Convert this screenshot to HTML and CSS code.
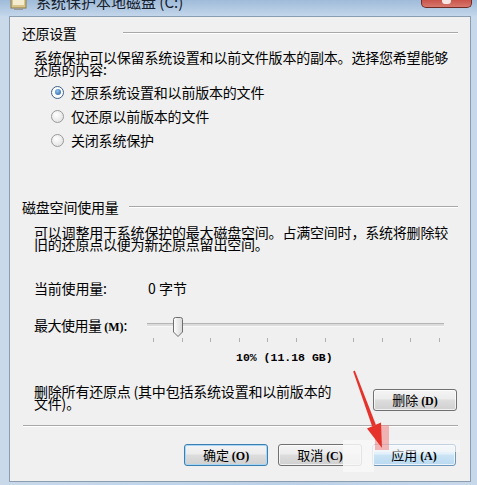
FILE: index.html
```html
<!DOCTYPE html>
<html lang="zh-CN">
<head>
    <meta charset="UTF-8">
    <title>系统保护本地磁盘 (C:)</title>
    <link rel="stylesheet" href="styles.css">
</head>
<body>
    <div class="window">
        <div class="titlebar">
            <div class="title">
                <svg class="app-icon" width="18" height="12" viewBox="0 0 18 12">
                    <rect x="1" y="0" width="15" height="9" fill="#d9c58a" stroke="#8a7a4a"/>
                    <rect x="3" y="1" width="11" height="5" fill="#f3ecd0"/>
                    <rect x="4" y="9" width="9" height="2" fill="#9a9a9a"/>
                </svg>
                <span class="title-text">系统保护本地磁盘 (C:)</span>
            </div>
            <div class="close-btn"><span class="close-x"></span></div>
        </div>

        <div class="frame">
            <div class="client">
                <div class="group-head">
                    <span>还原设置</span>
                    <span class="rule rule-restore"></span>
                </div>
                <p class="desc">系统保护可以保留系统设置和以前文件版本的副本。选择您希望能够<br>还原的内容:</p>

                <div class="radio-list">
                    <div class="radio-row"><span class="radio checked"></span>还原系统设置和以前版本的文件</div>
                    <div class="radio-row"><span class="radio"></span>仅还原以前版本的文件</div>
                    <div class="radio-row"><span class="radio"></span>关闭系统保护</div>
                </div>

                <div class="group-head group-disk">
                    <span>磁盘空间使用量</span>
                    <span class="rule rule-disk"></span>
                </div>
                <p class="desc">可以调整用于系统保护的最大磁盘空间。占满空间时，系统将删除较<br>旧的还原点以便为新还原点留出空间。</p>

                <div class="usage-row">
                    <span class="field-label">当前使用量:</span>
                    <span>0 字节</span>
                </div>

                <div class="slider-row">
                    <span class="field-label">最大使用量 <span class="key">(M)</span>:</span>
                    <div class="slider">
                        <div class="track-area"><div class="track"></div></div>
                        <svg class="thumb" style="left: 25px" width="12" height="20" viewBox="0 0 12 20">
                            <defs>
                                <linearGradient id="thumbFill" x1="0" y1="0" x2="1" y2="0">
                                    <stop offset="0" stop-color="#fdfdfd"/>
                                    <stop offset="1" stop-color="#d8d8d8"/>
                                </linearGradient>
                            </defs>
                            <path d="M1.5 2.5 Q1.5 0.5 3.5 0.5 L8.5 0.5 Q10.5 0.5 10.5 2.5 L10.5 15 L6 19.5 L1.5 15 Z" fill="url(#thumbFill)" stroke="#6e6e6e"/>
                        </svg>
                        <div class="ticks">
                            <i></i><i></i><i></i><i></i><i></i><i></i><i></i><i></i><i></i><i></i><i></i>
                        </div>
                    </div>
                </div>
                <div class="slider-value">10% (11.18 GB)</div>

                <div class="delete-row">
                    <p class="desc">删除所有还原点 (其中包括系统设置和以前版本的<br>文件)。</p>
                    <button class="btn btn-delete">删除 <span class="key">(D)</span></button>
                </div>

                <div class="separator"></div>

                <div class="actions">
                    <button class="btn btn-default">确定 <span class="key">(O)</span></button>
                    <button class="btn">取消 <span class="key">(C)</span></button>
                    <button class="btn btn-apply">应用 <span class="key">(A)</span></button>
                </div>
            </div>
        </div>

        <!-- watermark / annotation layer -->
        <div class="smudge smudge-left"></div>
        <div class="smudge smudge-right"></div>
        <div class="smudge-pink"></div>
        <svg class="arrow" width="477" height="485" viewBox="0 0 477 485">
            <polygon points="354.8,370.6 353.2,371.4 372.1,426.2 375.9,424.8" fill="#e5322b"/>
            <polygon points="381,422.4 367,428.6 382,448" fill="#e5322b"/>
        </svg>
    </div>
</body>
</html>
```

FILE: styles.css
```css
body {
    margin: 0;
    font-family: "Noto Sans CJK SC", "Noto Sans", sans-serif;
    color: #000;
    background-color: #c4d5e7;
    overflow: hidden;
}

.window {
    position: relative;
    width: 477px;
    height: 485px;
    display: flex;
    flex-direction: column;
    background: linear-gradient(to right, #c9d9ea, #bcd0e6 60%, #c7d8ea);
}

/* title bar, cut off at the top of the shot */
.titlebar {
    height: 16px;
    display: flex;
    justify-content: space-between;
    align-items: flex-start;
    overflow: hidden;
    background: linear-gradient(to bottom, #9fbbd9, #c3d6ea);
}

.title {
    display: flex;
    align-items: flex-start;
    padding-left: 10px;
}

.app-icon {
    margin-top: -1px;
}

.title-text {
    margin-left: 8px;
    margin-top: -8px;
    font-size: 15px;
    line-height: 20px;
    color: #15202c;
}

.close-btn {
    width: 49px;
    height: 7px;
    margin-right: 5px;
    border: 1px solid #6f2b24;
    border-top: none;
    border-radius: 0 0 5px 5px;
    background: linear-gradient(to bottom, #c9544a, #d7786d);
    display: flex;
    justify-content: center;
}

.close-x {
    width: 9px;
    height: 4px;
    background-color: #f6e6e4;
    border-radius: 0 0 3px 3px;
}

.frame {
    flex: 1;
    display: flex;
    padding: 0 6px 3px 9px;
}

.client {
    flex: 1;
    display: flex;
    flex-direction: column;
    background-color: #f0f0f0;
    border: 1px solid #8b9db1;
    padding-top: 8px;
    font-size: 14px;
}

.group-head {
    display: flex;
    align-items: center;
    padding: 0 12px;
    line-height: 16px;
    letter-spacing: -0.4px;
}

.group-disk {
    margin-top: 47px;
    letter-spacing: -0.2px;
}

.rule {
    flex: 1;
    border-top: 1px solid #a8a8a8;
    border-bottom: 1px solid #ffffff;
}

.rule-restore {
    margin-left: 47px;
}

.rule-disk {
    margin-left: 10px;
}

.desc {
    margin: 10px 0 0;
    padding-left: 24px;
    line-height: 12px;
    letter-spacing: -0.2px;
    white-space: nowrap;
}

.group-disk + .desc {
    margin-top: 11px;
}

.radio-list {
    margin-top: 5px;
    padding-left: 41px;
}

.radio-row {
    height: 24px;
    display: flex;
    align-items: center;
    gap: 7px;
    letter-spacing: -0.2px;
}

.radio {
    width: 11px;
    height: 11px;
    border-radius: 50%;
    border: 1px solid #9a9a9a;
    background: radial-gradient(circle at 40% 35%, #ffffff, #dcdcdc);
    display: flex;
    justify-content: center;
    align-items: center;
}

.radio.checked {
    border-color: #3d5f8a;
    background: #ffffff;
}

.radio.checked::after {
    content: "";
    width: 6px;
    height: 6px;
    border-radius: 50%;
    background: radial-gradient(circle at 40% 35%, #8fc2f0, #1f5a9c);
}

.usage-row {
    margin-top: 30px;
    padding-left: 24px;
    display: flex;
    line-height: 16px;
}

.field-label {
    width: 114px;
    letter-spacing: -0.2px;
}

.key {
    font-family: "Liberation Serif", serif;
    font-size: 12px;
    font-weight: bold;
    letter-spacing: 0;
}

.slider-row {
    margin-top: 18px;
    padding-left: 24px;
    display: flex;
    align-items: flex-start;
}

.slider-row .field-label {
    width: 113px;
    line-height: 22px;
    letter-spacing: -0.5px;
}

.slider {
    position: relative;
    width: 297px;
}

.track-area {
    height: 22px;
    display: flex;
    align-items: center;
}

.track {
    flex: 1;
    height: 2px;
    border-top: 1px solid #b4b4b4;
    border-bottom: 1px solid #f8f8f8;
    background-color: #dcdcdc;
}

.thumb {
    position: absolute;
    top: 3px;
}

.ticks {
    margin-top: 2px;
    padding: 0 4px 0 6px;
    display: flex;
    justify-content: space-between;
}

.ticks i {
    width: 1px;
    height: 4px;
    background-color: #b0b0b0;
}

.slider-value {
    margin-top: 9px;
    padding-left: 226px;
    font-family: "Liberation Mono", monospace;
    font-size: 11.5px;
    font-weight: bold;
    line-height: 14px;
}

.delete-row {
    margin-top: 20px;
    padding-right: 13px;
    display: flex;
    justify-content: space-between;
    align-items: flex-start;
}

.delete-row .desc {
    margin: 0;
}

.btn {
    width: 84px;
    height: 22px;
    padding: 0;
    border: 1px solid #707070;
    border-radius: 3px;
    background: linear-gradient(to bottom, #f4f4f4 0%, #ececec 45%, #dddddd 50%, #d0d0d0 100%);
    box-shadow: inset 0 0 0 1px rgba(255, 255, 255, 0.7);
    font-family: "Noto Sans CJK SC", sans-serif;
    font-size: 13px;
    line-height: 18px;
    color: #000;
}

.btn-delete {
    margin-top: 4px;
}

.btn-default {
    border-color: #3c7fb1;
    box-shadow: inset 0 0 0 1px #a9d6f5;
}

.btn-apply {
    background: linear-gradient(to bottom, #f0f6fb 0%, #e3f0fa 45%, #cbe4f5 50%, #b9d9f0 100%);
    border-color: #6f96b8;
}

.separator {
    margin: 14px 12px 0 13px;
    border-top: 1px solid #a8a8a8;
    border-bottom: 1px solid #ffffff;
}

.actions {
    margin-top: 17px;
    padding-right: 14px;
    display: flex;
    justify-content: flex-end;
    gap: 10px;
}

/* smudged watermark over the lower right buttons */
.smudge {
    position: absolute;
    background-color: rgba(248, 248, 248, 0.85);
}

.smudge-left {
    left: 343px;
    top: 440px;
    width: 31px;
    height: 32px;
}

.smudge-right {
    left: 374px;
    top: 440px;
    width: 86px;
    height: 12px;
    background-color: rgba(248, 248, 248, 0.6);
}

.smudge-pink {
    position: absolute;
    left: 375px;
    top: 425px;
    width: 14px;
    height: 25px;
    background-color: rgba(238, 130, 130, 0.55);
}

.arrow {
    position: absolute;
    left: 0;
    top: 0;
    pointer-events: none;
}
```
